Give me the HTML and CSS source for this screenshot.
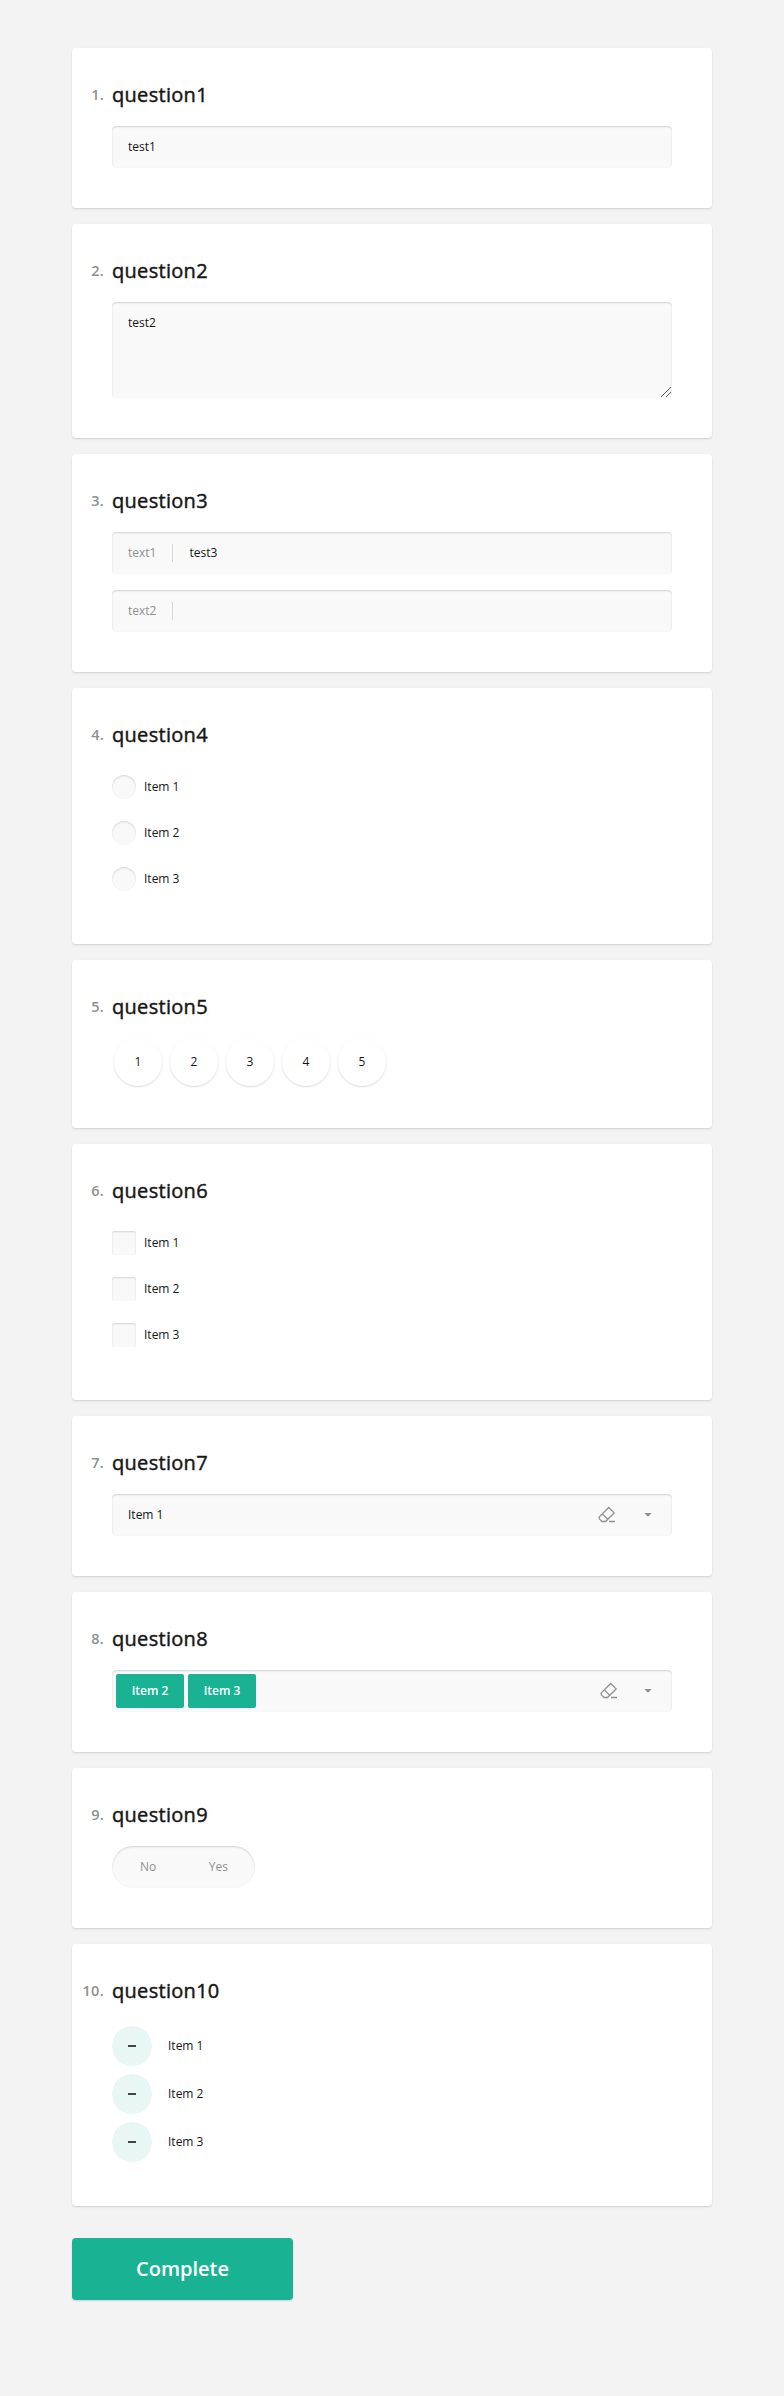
FILE: index.html
```html
<!DOCTYPE html>
<html lang="en">
<head>
<meta charset="utf-8">
<title>Survey</title>
<link rel="stylesheet" href="styles.css">
</head>
<body>
<form class="survey">
  <section class="card">
    <h5 class="title"><span class="num">1.</span>question1</h5>
    <input class="field single" type="text" value="test1">
  </section>
  <section class="card">
    <h5 class="title"><span class="num">2.</span>question2</h5>
    <div class="area-wrap">
      <textarea class="field area">test2</textarea>
      <svg class="grip" width="10" height="10" viewBox="0 0 10 10"><path d="M0 10 10 0M5 10 10 5"/></svg>
    </div>
  </section>
  <section class="card">
    <h5 class="title"><span class="num">3.</span>question3</h5>
    <div class="stack">
      <label class="field multi"><span class="multi-label">text1</span><input class="bare" type="text" value="test3"></label>
      <label class="field multi"><span class="multi-label">text2</span><input class="bare" type="text"></label>
    </div>
  </section>
  <section class="card card-list">
    <h5 class="title"><span class="num">4.</span>question4</h5>
    <div class="option"><span class="mark round"></span>Item 1</div>
    <div class="option"><span class="mark round"></span>Item 2</div>
    <div class="option"><span class="mark round"></span>Item 3</div>
  </section>
  <section class="card card-rating">
    <h5 class="title"><span class="num">5.</span>question5</h5>
    <div class="rating"><span class="rate">1</span><span class="rate">2</span><span class="rate">3</span><span class="rate">4</span><span class="rate">5</span></div>
  </section>
  <section class="card card-list">
    <h5 class="title"><span class="num">6.</span>question6</h5>
    <div class="option"><span class="mark"></span>Item 1</div>
    <div class="option"><span class="mark"></span>Item 2</div>
    <div class="option"><span class="mark"></span>Item 3</div>
  </section>
  <section class="card">
    <h5 class="title"><span class="num">7.</span>question7</h5>
    <div class="field select">
      <span class="value">Item 1</span>
      <svg class="eraser" width="18" height="18" viewBox="0 0 18 18"><path d="M1.6 10.6 10.7 1.5 16.1 6.9 7.5 15.5H4L1.6 13.1a1.7 1.7 0 0 1 0-2.5ZM4.4 7.9l5.4 5.4M11 15.5h6"/></svg>
      <svg class="arrow" width="8" height="4" viewBox="0 0 8 4"><path d="M.4 0h7.2L4.8 3.1q-.8.8-1.6 0z"/></svg>
    </div>
  </section>
  <section class="card">
    <h5 class="title"><span class="num">8.</span>question8</h5>
    <div class="field select tags">
      <span class="tag">Item 2</span><span class="tag">Item 3</span>
      <svg class="eraser" width="18" height="18" viewBox="0 0 18 18"><path d="M1.6 10.6 10.7 1.5 16.1 6.9 7.5 15.5H4L1.6 13.1a1.7 1.7 0 0 1 0-2.5ZM4.4 7.9l5.4 5.4M11 15.5h6"/></svg>
      <svg class="arrow" width="8" height="4" viewBox="0 0 8 4"><path d="M.4 0h7.2L4.8 3.1q-.8.8-1.6 0z"/></svg>
    </div>
  </section>
  <section class="card">
    <h5 class="title"><span class="num">9.</span>question9</h5>
    <div class="switch"><span>No</span><span>Yes</span></div>
  </section>
  <section class="card card-ranking">
    <h5 class="title"><span class="num">10.</span>question10</h5>
    <div class="rank"><span class="bullet"></span>Item 1</div>
    <div class="rank"><span class="bullet"></span>Item 2</div>
    <div class="rank"><span class="bullet"></span>Item 3</div>
  </section>
  <button class="complete" type="button">Complete</button>
</form>
</body>
</html>
```
FILE: styles.css
```css
* { box-sizing: border-box; }
body {
  margin: 0;
  min-height: 2396px;
  background: #f3f3f3;
  font: 12px/18px "Open Sans", sans-serif;
  color: #161616;
}
.survey {
  width: 640px;
  margin: 0 auto;
  padding-top: 48px;
  display: flex;
  flex-direction: column;
  gap: 16px;
}
.card {
  background: #fff;
  border-radius: 4px;
  box-shadow: 0 1px 2px rgba(0, 0, 0, .15);
  padding: 32px 40px 40px;
}
.title {
  display: flex;
  align-items: center;
  height: 30px;
  margin: 0 0 16px;
  font-size: 20px;
  font-weight: 400;
  letter-spacing: .3px;
  -webkit-text-stroke: .45px #161616;
}
.num {
  width: 40px;
  margin-left: -40px;
  padding-right: 8px;
  text-align: right;
  font-size: 14.5px;
  font-weight: 600;
  color: #909090;
  -webkit-text-stroke: 0;
}
.field {
  display: flex;
  align-items: center;
  width: 560px;
  height: 42px;
  padding: 0 16px;
  border: 0;
  border-radius: 4px;
  outline: 0;
  background: #f9f9f9;
  box-shadow: inset 0 1px 2px rgba(0, 0, 0, .15);
  font: inherit;
  color: inherit;
}
.single { padding-bottom: 1px; }
.area-wrap { position: relative; }
.area { display: block; height: 96px; padding: 12px 16px; resize: none; }
.grip {
  position: absolute;
  right: 1px;
  bottom: 1px;
  fill: none;
  stroke: #555;
  stroke-width: 1;
}
.stack { display: flex; flex-direction: column; gap: 16px; }
.multi-label {
  padding-right: 16px;
  margin-right: 16px;
  border-right: 1px solid #d6d6d6;
  color: #909090;
}
.bare { flex: 1; padding: 0; border: 0; outline: 0; background: none; font: inherit; color: inherit; }
.card-list { padding-bottom: 42px; }
.card-list .title { margin-bottom: 14px; }
.option { display: flex; align-items: center; gap: 8px; height: 46px; }
.mark {
  width: 24px;
  height: 24px;
  border-radius: 2px;
  background: #f9f9f9;
  box-shadow: inset 0 1px 2px rgba(0, 0, 0, .15);
}
.round { border-radius: 50%; }
.card-rating { padding-bottom: 42px; }
.rating { display: flex; gap: 8px; padding-left: 2px; }
.rate {
  width: 48px;
  height: 48px;
  border-radius: 50%;
  box-shadow: 0 1px 2px rgba(0, 0, 0, .15);
  line-height: 48px;
  text-align: center;
}
.eraser { margin: 0 28px 0 auto; fill: none; stroke: #909090; stroke-width: 1.3; }
.arrow { fill: #909090; }
.select { padding-right: 20px; }
.tags { padding-left: 4px; gap: 4px; }
.tags .eraser { margin-right: 22px; }
.tag {
  width: 68px;
  padding: 8px 0;
  border-radius: 2px;
  background: #19b394;
  color: #fff;
  font-weight: 600;
  text-align: center;
}
.switch {
  display: flex;
  justify-content: space-between;
  width: 143px;
  height: 42px;
  padding: 0 27px 0 28px;
  border-radius: 21px;
  background: #f9f9f9;
  box-shadow: inset 0 1px 2px rgba(0, 0, 0, .15);
  line-height: 42px;
  color: #909090;
}
.card-ranking { padding-bottom: 44px; }
.card-ranking .title { margin-bottom: 20px; }
.rank { display: flex; align-items: center; gap: 16px; }
.rank + .rank { margin-top: 8px; }
.bullet {
  display: grid;
  place-items: center;
  width: 40px;
  height: 40px;
  border-radius: 50%;
  background: #e8f7f4;
}
.bullet::before { content: ""; width: 8px; height: 2px; background: #454545; }
.complete {
  align-self: flex-start;
  width: 221px;
  height: 62px;
  margin-top: 16px;
  padding: 0;
  border: 0;
  border-radius: 4px;
  background: #19b394;
  box-shadow: 0 1px 2px rgba(0, 0, 0, .15);
  color: #fff;
  font: 600 20px/30px "Open Sans", sans-serif;
}
```
